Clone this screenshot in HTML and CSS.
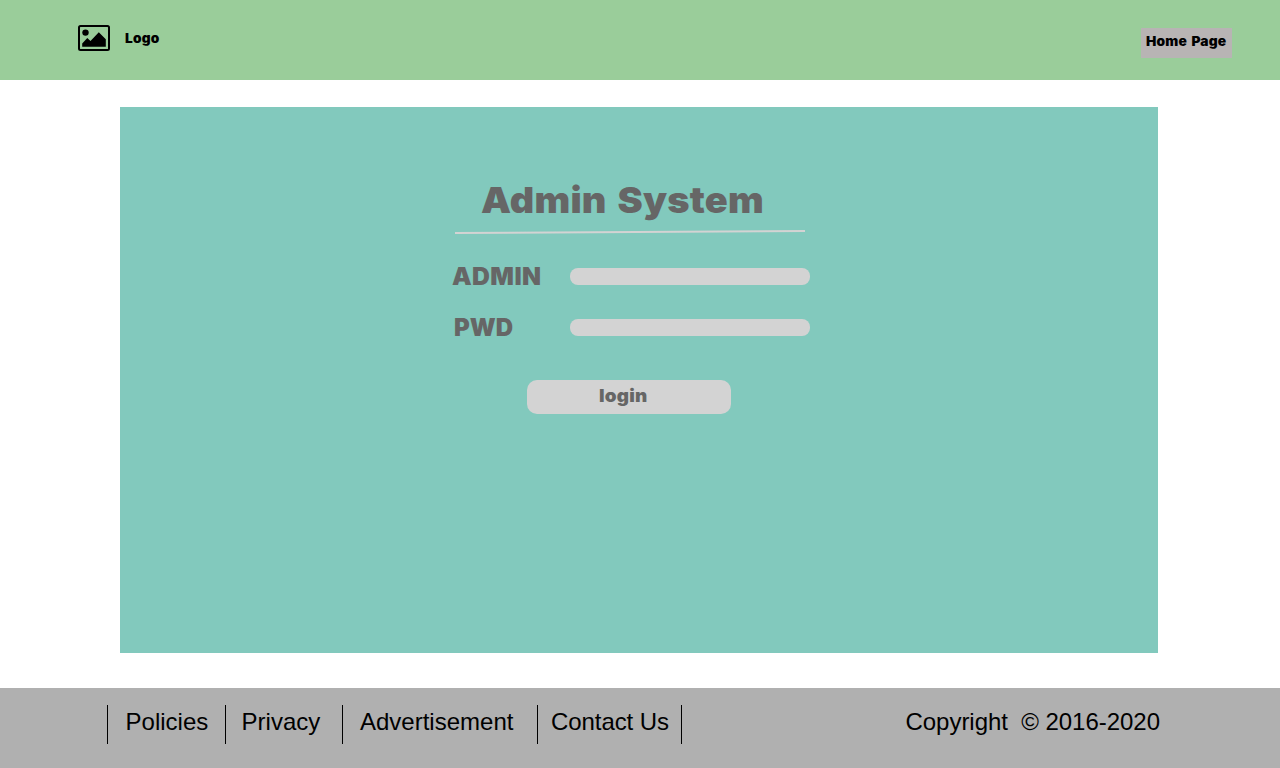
FILE: index.html
```html
<!DOCTYPE html>
<html lang="en">
<head>
<meta charset="utf-8">
<title>Admin System</title>
<link rel="stylesheet" href="styles.css">
</head>
<body>
<header class="header">
  <div class="brand">
    <svg class="brand-icon" width="32" height="26" viewBox="0 0 32 26">
      <rect x="1" y="1" width="30" height="24" rx="1.5" fill="none" stroke="#000" stroke-width="2"/>
      <circle cx="7.5" cy="7.6" r="3.2"/>
      <path d="M4.2 21.8V18.4L9.3 13L12.5 16L20.8 7.2L27.8 14.2V21.8Z"/>
    </svg>
    <span class="heavy brand-name">Logo</span>
  </div>
  <a class="home"><span class="heavy home-text">Home Page</span></a>
</header>
<main class="panel">
  <h1 class="title"><span class="heavy title-text">Admin System</span></h1>
  <svg class="rule" width="350" height="4" viewBox="0 0 350 4"><path d="M0 3L350 1" stroke="#d3d3d3" stroke-width="2"/></svg>
  <form class="form">
    <div class="field"><label class="label" for="admin"><span class="heavy admin-text">ADMIN</span></label><input class="input" id="admin"></div>
    <div class="field"><label class="label" for="pwd"><span class="heavy pwd-text">PWD</span></label><input class="input" id="pwd" type="password"></div>
    <button class="login" type="button"><span class="heavy login-text">login</span></button>
  </form>
</main>
<footer class="footer">
  <nav class="links">
    <a class="link policies">Policies</a>
    <a class="link privacy">Privacy</a>
    <a class="link adverts">Advertisement</a>
    <a class="link contact">Contact Us</a>
  </nav>
  <p class="copyright">Copyright&nbsp; © 2016-2020</p>
</footer>
</body>
</html>
```
FILE: styles.css
```css
* { box-sizing: border-box; }
body { margin: 0; height: 768px; display: flex; flex-direction: column; background: #fff; font-family: "Liberation Sans", Arial, sans-serif; color: #000; overflow: hidden; }
.heavy { display: inline-block; font-family: Inter, "Liberation Sans", sans-serif; font-weight: 900; white-space: nowrap; transform-origin: 0 50%; }
.header { height: 80px; flex: none; background: #9acd9a; display: flex; justify-content: space-between; align-items: flex-start; padding: 25px 48px 0 78px; }
.brand { display: flex; gap: 15px; align-items: center; height: 26px; }
.brand-icon { display: block; }
.brand-name { font-size: 13px; line-height: 20px; letter-spacing: 0.2px; transform: scaleX(1.05); }
.home { width: 91px; height: 30px; margin-top: 3px; padding: 3px 0 0 5px; background: #b8b4b4; }
.home-text { font-size: 13px; line-height: 20px; display: block; letter-spacing: 0.2px; word-spacing: 1.2px; transform: scaleX(1.06); }
.panel { width: 1038px; height: 546px; flex: none; margin: 27px 0 0 120px; background: #82c9bd; color: #666; padding: 68px 0 0 332px; }
.title { margin: 0 0 0 29px; height: 55px; line-height: 50px; font-size: 36px; }
.title-text { line-height: 50px; display: block; letter-spacing: 0.2px; word-spacing: 3px; transform: scaleX(1.053); }
.rule { display: block; margin-left: 3px; }
.form { margin-top: 34px; }
.field { display: flex; height: 17px; margin-bottom: 34px; align-items: center; }
.label { width: 118px; font-size: 24px; line-height: 30px; }
.admin-text { letter-spacing: 0.4px; transform: scaleX(1.03); }
.pwd-text { margin-left: 2px; }
.input { width: 240px; height: 17px; border: 0; border-radius: 8px; background: #d3d3d3; padding: 0 8px; }
.login { display: flex; width: 204px; height: 34px; margin: 44px 0 0 75px; padding: 4px 0 0 72px; border: 0; border-radius: 10px; background: #d3d3d3; color: #666; font-size: 18px; }
.login-text { line-height: 24px; letter-spacing: 0.2px; transform: scaleX(1.05); }
.footer { height: 80px; flex: none; margin-top: 35px; padding: 17px 120px 0 107px; background: #b0b0b0; display: flex; justify-content: space-between; font-size: 24px; line-height: 34px; font-kerning: none; }
.links { display: flex; height: 39px; border-right: 1px solid #000; }
.link { border-left: 1px solid #000; white-space: nowrap; }
.policies { width: 118px; padding-left: 17.6px; }
.privacy { width: 117px; padding-left: 15.6px; }
.adverts { width: 195px; padding-left: 17px; }
.contact { width: 144px; padding-left: 13px; letter-spacing: -0.08px; }
.copyright { margin: 0; white-space: nowrap; letter-spacing: -0.03px; }
```
